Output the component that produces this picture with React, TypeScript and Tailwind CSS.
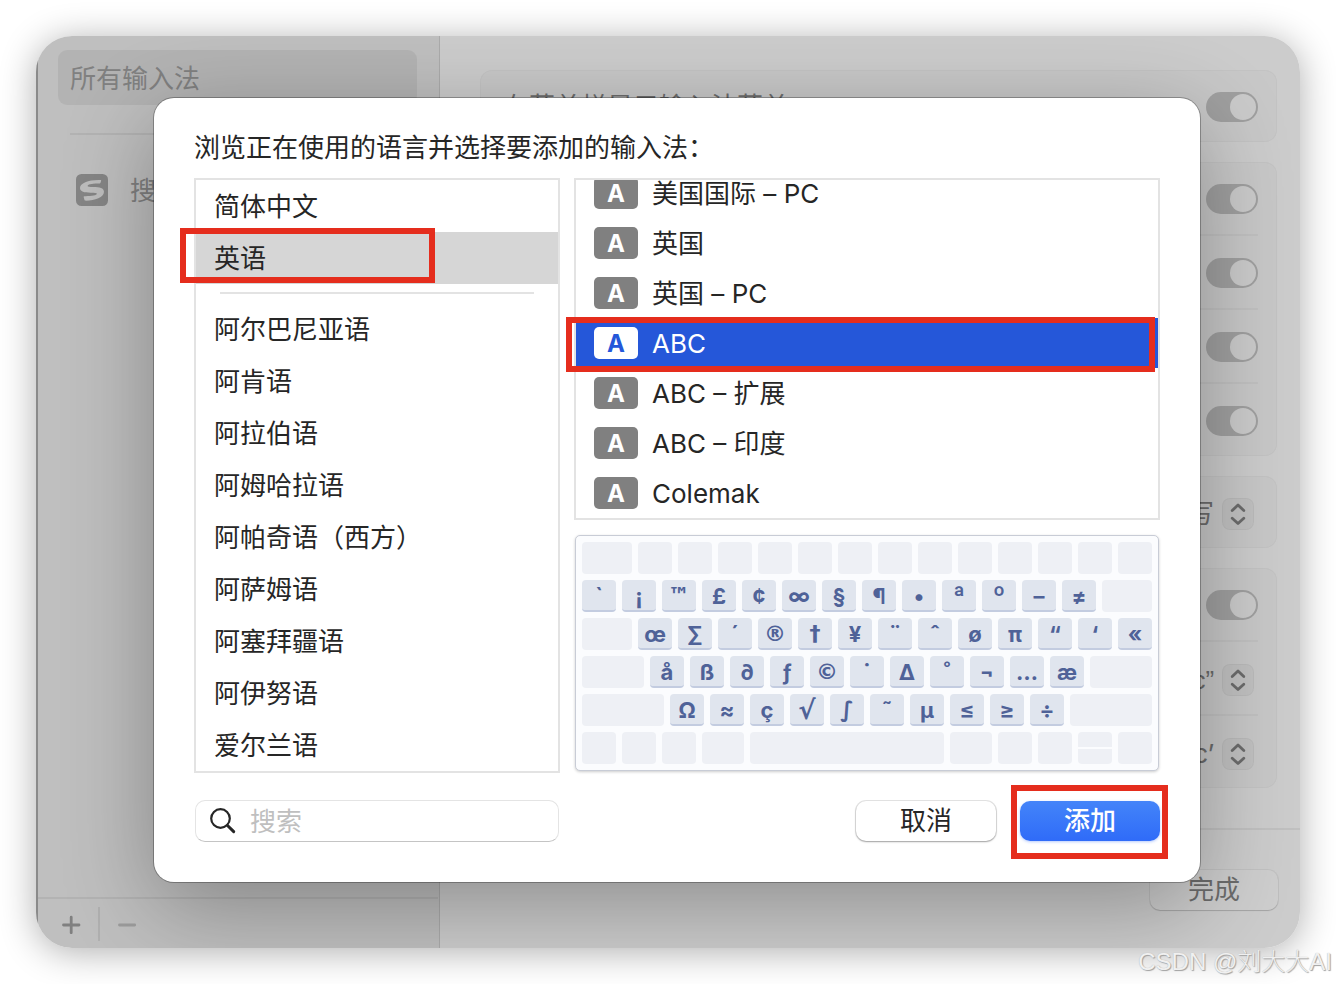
import { useState } from 'react';
import { clsx } from 'clsx';

const PINNED = ['简体中文', '英语'];
const LANGUAGES = [
  '阿尔巴尼亚语',
  '阿肯语',
  '阿拉伯语',
  '阿姆哈拉语',
  '阿帕奇语（西方）',
  '阿萨姆语',
  '阿塞拜疆语',
  '阿伊努语',
  '爱尔兰语',
];
const LAYOUTS = ['美国国际 – PC', '英国', '英国 – PC', 'ABC', 'ABC – 扩展', 'ABC – 印度', 'Colemak'];

// Option-layer characters, one string per keyboard row
const NUMBER_ROW = Array.from('`¡™£¢∞§¶•ªº–≠');
const TOP_ROW = Array.from('œ∑´®†¥¨ˆøπ“‘«');
const HOME_ROW = Array.from('åß∂ƒ©˙∆˚¬…æ');
const BOTTOM_ROW = Array.from('Ω≈ç√∫˜µ≤≥÷');

function Marker({ className }: { className: string }) {
  return <span className={clsx('pointer-events-none absolute z-10 border-6 border-[#e52d1d]', className)} />;
}

function Key({ char }: { char: string }) {
  return (
    <span
      className={clsx(
        'flex h-8 w-[34px] items-center justify-center rounded-[4px] border-b-2 border-[#c3cce0] bg-[#e0e5ee] pt-0.5 leading-none font-bold text-[#4f6298]',
        'ªº√'.includes(char) ? 'text-[26px]' : 'text-[22px]',
        // Inter draws these too small
        '™®©†√∫'.includes(char) && "font-['DejaVu_Sans',sans-serif]",
      )}
    >
      {char}
    </span>
  );
}

function Blank({ className = 'w-[34px]' }: { className?: string }) {
  return <span className={clsx('h-8 rounded-[4px] bg-[#eef0f5]', className)} />;
}

function Keyboard() {
  return (
    <div className="flex flex-col gap-1.5 rounded-[5px] border border-[#c8ccd6] bg-[#fbfcfe] px-1.5 py-1.5 shadow-[0_1px_3px_rgba(0,0,0,0.2)]">
      <div className="flex gap-1.5">
        <Blank className="flex-1" />
        {Array.from({ length: 13 }, (_, i) => <Blank key={i} />)}
      </div>
      <div className="flex gap-1.5">
        {NUMBER_ROW.map(c => <Key key={c} char={c} />)}
        <Blank className="flex-1" />
      </div>
      <div className="flex gap-1.5">
        <Blank className="flex-1" />
        {TOP_ROW.map(c => <Key key={c} char={c} />)}
      </div>
      <div className="flex gap-1.5">
        <Blank className="flex-1" />
        {HOME_ROW.map(c => <Key key={c} char={c} />)}
        <Blank className="flex-1" />
      </div>
      <div className="flex gap-1.5">
        <Blank className="flex-1" />
        {BOTTOM_ROW.map(c => <Key key={c} char={c} />)}
        <Blank className="flex-1" />
      </div>
      <div className="flex gap-1.5">
        <Blank />
        <Blank />
        <Blank />
        <Blank className="w-[42px]" />
        <Blank className="flex-1" />
        <Blank className="w-[42px]" />
        <Blank />
        <Blank />
        {/* up / down arrows share one key */}
        <span className="flex h-8 w-[34px] flex-col gap-0.5">
          <span className="flex-1 rounded-t-[4px] bg-[#eef0f5]" />
          <span className="flex-1 rounded-b-[4px] bg-[#eef0f5]" />
        </span>
        <Blank />
      </div>
    </div>
  );
}

function Card({ children }: { children: React.ReactNode }) {
  return (
    <div className="rounded-xl bg-black/2 px-[19px] shadow-[inset_0_0_0_1px_rgba(0,0,0,0.025)]">
      <div className="divide-y-2 divide-black/3">{children}</div>
    </div>
  );
}

function ToggleRow({ label, text }: { label: string; text?: string }) {
  return (
    <div className="box-content flex h-[70px] items-center justify-between pt-0.5 pl-1">
      <span>{text}</span>
      <input
        type="checkbox"
        role="switch"
        aria-label={label}
        defaultChecked
        className="relative h-[30px] w-[52px] appearance-none rounded-full bg-black/20 before:absolute before:top-0.5 before:right-0.5 before:size-[26px] before:rounded-full before:bg-[#cbcbcb]"
      />
    </div>
  );
}

function SelectRow({ label, value, className }: { label: string; value: string; className?: string }) {
  return (
    <div className="box-content flex h-[68px] items-center justify-end pt-1 pr-1">
      <div className="relative flex items-center">
        <select aria-label={label} className={clsx('appearance-none bg-transparent pr-[39px]', className)}>
          <option>{value}</option>
        </select>
        <span className="pointer-events-none absolute right-0 rounded-lg bg-black/3 shadow-[inset_0_0_0_1px_rgba(0,0,0,0.03)]">
          <svg viewBox="0 0 32 32" className="size-8" fill="none" stroke="#6c6c6c" strokeWidth="2.8" strokeLinecap="round" strokeLinejoin="round">
            <path d="M10.2 12.6 16 7l5.8 5.6M10.2 20.2 16 25.6l5.8-5.4" />
          </svg>
        </span>
      </div>
    </div>
  );
}

function Sidebar() {
  return (
    <aside className="flex w-[404px] shrink-0 flex-col border-r border-black/10 bg-[#bfbfbf] pt-3.5 text-[#808080] shadow-[inset_2px_0_0_#8a8a8a]">
      <a href="#all" className="mx-[22px] flex h-[55px] items-center rounded-[9px] bg-black/6 pt-0.5 pl-3">
        所有输入法
      </a>
      <div className="mx-[34px] mt-7 h-0.5 bg-black/6" />
      <a href="#sogou" className="mt-[39px] flex h-8 items-center gap-[22px] px-10">
        <svg viewBox="0 0 32 32" className="size-8 shrink-0">
          <rect width="32" height="32" rx="5.5" fill="#858585" />
          <path
            d="M24.2 6C13 5.600 4 9 4 14c0 3.700 4.500 4.600 10.500 4.700 4.300.1 6.400.2 6.400 1.100 0 1.500-5.600 2.500-12.200 2.400-.9 0-1.200.4-1 1.100l.7 2.500c.2.7.7.9 1.500.9C19 26.600 28 23.500 28 17.800c0-3.900-4.500-4.700-10.500-4.800-4-.1-5.900-.2-5.900-1 0-1.500 4.500-2.600 11.500-2.400.9 0 1.300-.3 1.500-1l.5-1.500c.2-.8-.1-1.100-.9-1.100Z"
            fill="#bdbdbd"
          />
        </svg>
        <span className="pt-0.5">搜狗拼音</span>
      </a>
      <div className="mt-auto mr-px ml-0.5 flex h-[51px] items-center border-t-2 border-black/6">
        <button aria-label="添加输入法" className="flex h-full w-[60px] items-center justify-center pl-1.5">
          <svg viewBox="0 0 20 20" className="size-5" stroke="#808080" strokeWidth="2.8" strokeLinecap="round">
            <path d="M2.500 11h15.500M10.200 3.200v15.500" />
          </svg>
        </button>
        <span className="h-[34px] w-0.5 bg-black/8" />
        <button aria-label="移除输入法" className="flex h-full w-[60px] items-center pl-[17px]">
          <svg viewBox="0 0 20 20" className="size-5" stroke="#9c9c9c" strokeWidth="2.8" strokeLinecap="round">
            <path d="M2.500 11h15.200" />
          </svg>
        </button>
      </div>
    </aside>
  );
}

function SettingsPane() {
  return (
    <main className="flex min-w-0 flex-1 flex-col bg-[#cccccc] text-[#6c6c6c]">
      <div className="flex flex-col gap-5 pt-[34px] pr-[23px] pb-10 pl-10">
        <Card>
          <ToggleRow label="在菜单栏显示输入法菜单" text="在菜单栏显示输入法菜单" />
        </Card>
        <Card>
          <ToggleRow label="大写锁定键切换" />
          <ToggleRow label="自动切换到文稿的输入法" />
          <ToggleRow label="自动纠正拼写" />
          <ToggleRow label="自动大写字词的首字母" />
        </Card>
        <Card>
          <SelectRow label="大小写" value="大写" />
        </Card>
        <Card>
          <ToggleRow label="使用智能引号和破折号" />
          <SelectRow label="双引号" value="“abc”" className="font-['Liberation_Sans',sans-serif]" />
          <SelectRow label="单引号" value="‘abc’" />
        </Card>
      </div>
      <footer className="mt-auto flex justify-end border-t-2 border-black/6 pt-10 pr-[22px] pb-[38px]">
        <button className="h-10 w-[128px] rounded-[10px] bg-white/4 shadow-[0_1px_1px_rgba(0,0,0,0.15),0_0_0_1px_rgba(0,0,0,0.05)]">
          完成
        </button>
      </footer>
    </main>
  );
}

function AddSourceDialog() {
  const [language, setLanguage] = useState('英语');
  const [layout, setLayout] = useState('ABC');

  const languageItem = (name: string) => (
    <li key={name} className={clsx('relative', name === language && 'bg-[#d6d6d6]')}>
      <button onClick={() => setLanguage(name)} className="flex h-[52px] w-full items-center pt-0.5 pl-[18px]">
        {name}
      </button>
      {name === '英语' && <Marker className="-top-1 bottom-px -left-4 w-[255px]" />}
    </li>
  );

  return (
    <div
      role="dialog"
      aria-labelledby="dialog-title"
      className="absolute top-[62px] right-[100px] left-[118px] rounded-[20px] bg-white px-10 pt-8 pb-[39px] text-[#262626] shadow-[0_0_0_1px_rgba(0,0,0,0.28),0_24px_90px_rgba(0,0,0,0.31)]"
    >
      <h1 id="dialog-title" className="mb-3 leading-9">浏览正在使用的语言并选择要添加的输入法：</h1>
      <div className="flex items-start gap-3.5">
        <div className="w-[366px] border-2 border-[#e3e3e3]">
          <ul>{PINNED.map(languageItem)}</ul>
          <div className="mx-6 mt-2 mb-[9px] h-0.5 bg-[#e3e3e3]" />
          <ul>{LANGUAGES.map(languageItem)}</ul>
        </div>

        <div className="flex min-w-0 flex-1 flex-col gap-[15px]">
          {/* scrolled to the end, so the first row is cut by the frame */}
          <ul className="flex h-[342px] flex-col justify-end overflow-x-visible overflow-y-clip border-2 border-[#e3e3e3]">
            {LAYOUTS.map(name => {
              const selected = name === layout;
              return (
                <li key={name} className={clsx('relative', selected && 'bg-[#2557d9] text-white')}>
                  <button onClick={() => setLayout(name)} className="flex h-[50px] w-full items-center gap-3.5 pl-[18px]">
                    <span
                      className={clsx(
                        'flex h-8 w-11 items-center justify-center rounded-[5px] pt-0.5 text-2xl leading-none font-bold',
                        selected ? 'bg-white text-[#2557d9]' : 'bg-[#808080] text-white',
                      )}
                    >
                      A
                    </span>
                    <span className="pt-0.5">{name}</span>
                  </button>
                  {name === 'ABC' && <Marker className="-top-px right-[3px] -bottom-1 -left-2.5" />}
                </li>
              );
            })}
          </ul>
          <div className="px-px">
            <Keyboard />
          </div>
        </div>
      </div>

      <div className="mt-[26px] flex h-11 items-center">
        <label className="ml-px flex h-[42px] w-[364px] items-center gap-3.5 rounded-[10px] border border-t-[#e4e4e4] border-r-[#e4e4e4] border-b-[#c4c4c4] border-l-[#e4e4e4] pl-3">
          <svg viewBox="0 0 28 28" className="size-7 shrink-0" fill="none" stroke="#262626" strokeLinecap="round">
            <circle cx="12.500" cy="11.500" r="9.300" strokeWidth="2.200" />
            <path d="m19.500 18.500 6.200 6.100" strokeWidth="3" />
          </svg>
          <input type="search" aria-label="搜索" placeholder="搜索" className="w-full min-w-0 bg-transparent outline-none placeholder:text-[#bfbfbf]" />
        </label>
        <div className="ml-auto flex items-center gap-6">
          <button className="h-10 w-[140px] rounded-[10px] bg-white shadow-[0_0_0_1px_rgba(0,0,0,0.1),0_1px_2px_rgba(0,0,0,0.3)]">
            取消
          </button>
          <div className="relative">
            <button className="h-10 w-[140px] rounded-[10px] bg-linear-to-b from-[#4484f9] to-[#2f6bf8] font-medium text-white shadow-[0_1px_3px_rgba(47,107,248,0.35)]">
              添加
            </button>
            <Marker className="-top-4 -right-2 -bottom-[18px] -left-[9px]" />
          </div>
        </div>
      </div>
    </div>
  );
}

export default function App() {
  return (
    <div className="relative min-h-screen overflow-hidden bg-white p-9 font-['Inter','Noto_Sans_CJK_SC',sans-serif] text-[26px] leading-none">
      <div className="relative flex overflow-hidden rounded-[36px] shadow-[0_4px_36px_rgba(0,0,0,0.32)]">
        <Sidebar />
        <SettingsPane />
        <AddSourceDialog />
      </div>
      <span className="absolute right-1 bottom-2 font-['Liberation_Sans','Noto_Sans_CJK_SC',sans-serif] text-2xl leading-7 font-light text-[#f0f0f0] [text-shadow:1px_1px_1px_#a0a0a0,0_0_1px_#b0b0b0]">
        CSDN @刘大大AI
      </span>
    </div>
  );
}
